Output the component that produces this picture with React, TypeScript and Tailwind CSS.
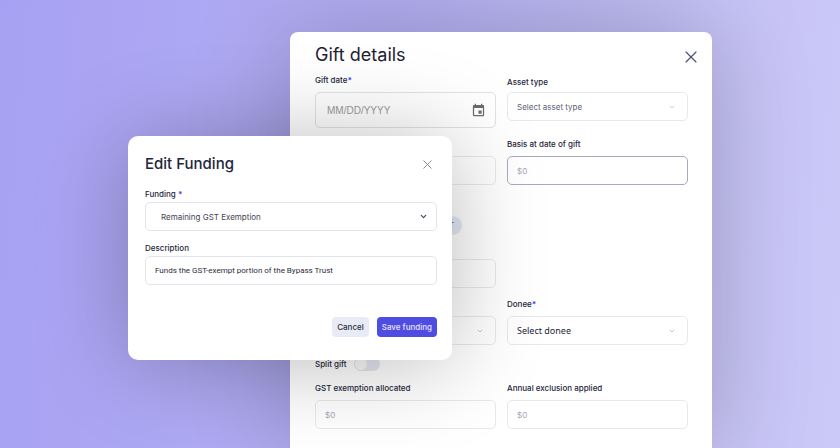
import type { ReactNode } from "react";
import { ChevronDown, X } from "lucide-react";
import { MdEvent } from "react-icons/md";

const label = "block h-4 text-[8px] leading-4 font-medium text-[#23263a]";
const box = "block w-full rounded-[5px] border bg-transparent outline-none";

function Required() {
  return <span className="font-bold text-[#4f46e5]">*</span>;
}

type FieldProps = { id: string; text: ReactNode; className?: string };

function MoneyField({ id, text, className = "border-[#10183018]" }: FieldProps) {
  return (
    <div>
      <label htmlFor={id} className={`${label} mb-1`}>{text}</label>
      <input
        id={id}
        placeholder="$0"
        className={`${box} h-[29px] px-[9px] text-[8px] placeholder:text-[#a3a5b5] ${className}`}
      />
    </div>
  );
}

function SelectBox({ id, option, name, className, chevron }: { id: string; option: string; name?: string; className: string; chevron: string }) {
  return (
    <div className="grid items-center">
      <select
        id={id}
        aria-label={name}
        className={`${box} col-start-1 row-start-1 h-[29px] appearance-none pr-6 ${className}`}
      >
        <option>{option}</option>
      </select>
      <ChevronDown aria-hidden="true" className={`pointer-events-none col-start-1 row-start-1 justify-self-end ${chevron}`} />
    </div>
  );
}

function GiftDetails() {
  return (
    <section className="ml-[162px] min-h-[calc(100vh-32px)] rounded-t-[8px] bg-white pr-6 pb-5 pl-[25px] shadow-[0_0_100px_rgba(0,0,0,0.22)]">
      <header className="flex h-10 items-start justify-between pt-[13px]">
        <h1 className="text-[18px] leading-5 text-[#1f2233]">Gift details</h1>
        <button aria-label="Close gift details" className="-mr-[13px] pt-0.5 text-[#4b5270]">
          <X className="size-5" strokeWidth={1.4} />
        </button>
      </header>
      <form className="grid grid-cols-2 gap-x-[11px] gap-y-2">
        <div>
          <label htmlFor="gift-date" className={`${label} mb-1`}>Gift date<Required /></label>
          <div className="flex h-9 items-center rounded-[5px] border border-[#10183020] pr-[9px] pl-[11px]">
            <input
              id="gift-date"
              placeholder="MM/DD/YYYY"
              className="min-w-0 flex-1 bg-transparent font-['Liberation_Sans',sans-serif] text-[10px] outline-none placeholder:text-[#9a9a9e]"
            />
            <button type="button" aria-label="Choose date" className="text-[#6c6c6e]">
              <MdEvent className="size-[15px]" />
            </button>
          </div>
        </div>
        <div className="pt-0.5">
          <label htmlFor="asset-type" className={`${label} mb-0.5`}>Asset type</label>
          <SelectBox id="asset-type" option="Select asset type" className="border-[#10183018] pl-[9px] text-[8px] text-[#5b5f78]" chevron="mr-3 size-2 text-[#b4b6c2]" />
        </div>

        <input aria-label="Gift value" className={`${box} h-[29px] self-end border-[#10183018] px-[9px] text-[8px]`} />
        <MoneyField id="basis" text="Basis at date of gift" className="border-[#a9a8bd]" />

        <div className="col-start-1 flex h-[95px] flex-col justify-between pt-[23px]">
          <span className="h-[19px] w-[147px] rounded-full bg-[#e4e9f4] pr-2 text-right text-[8px] leading-[19px] text-[#4b5270]">GST</span>
          <input aria-label="Gift amount" className={`${box} h-[29px] border-[#10183018] px-[9px] text-[8px]`} />
        </div>

        <div className="col-start-1 self-end">
          <SelectBox id="donor" name="Donor" option="" className="border-[#10183018] pl-[9px] text-[8px]" chevron="mr-3 size-2 text-[#a4a6b2]" />
        </div>
        <div>
          <label htmlFor="donee" className={`${label} mb-1`}>Donee<Required /></label>
          <SelectBox id="donee" option="Select donee" className="border-[#10183018] pl-[9px] font-['Noto_Sans',sans-serif] text-[9px] text-[#23263a]" chevron="mr-3 size-2 text-[#a4a6b2]" />
        </div>

        <div className="col-span-2 flex h-[19px] items-center gap-2 pt-0.5">
          <label htmlFor="split-gift" className={label}>Split gift</label>
          <input
            id="split-gift"
            type="checkbox"
            role="switch"
            className="h-3.5 w-[26px] appearance-none rounded-full bg-[#e4e7f0] before:block before:size-3.5 before:rounded-full before:border before:border-[#e4e7f0] before:bg-[#fbfbfc]"
          />
        </div>

        <MoneyField id="gst" text="GST exemption allocated" />
        <MoneyField id="annual" text="Annual exclusion applied" />
      </form>
    </section>
  );
}

function EditFunding() {
  return (
    <div
      role="dialog"
      aria-labelledby="edit-funding"
      className="absolute top-[136px] left-0 w-[324px] rounded-[10px] bg-white pt-[18px] pr-[15px] pb-[23px] pl-[17px] shadow-[0_4px_90px_rgba(0,0,0,0.27)]"
    >
      <header className="flex h-5 items-center justify-between">
        <h2 id="edit-funding" className="text-[15px] leading-5 font-medium text-[#23263a]">Edit Funding</h2>
        <button aria-label="Close edit funding" className="mr-0.5 text-[#85868c]">
          <X className="size-[15px]" strokeWidth={1.5} />
        </button>
      </header>
      <form>
        <label htmlFor="funding" className={`${label} mt-3`}>Funding <Required /></label>
        <SelectBox id="funding" option="Remaining GST Exemption" className="border-[#e2e4ec] pl-[15px] text-[8px] text-[#44464f]" chevron="mr-[9px] size-[9px] stroke-[3] text-[#3f4560]" />
        <label htmlFor="description" className={`${label} mt-[9px]`}>Description</label>
        <input
          id="description"
          defaultValue="Funds the GST-exempt portion of the Bypass Trust"
          className={`${box} h-[29px] border-[#e2e4ec] px-[9px] font-['Roboto',sans-serif] text-[8px] text-[#2b2d3a]`}
        />
        <div className="mt-8 flex justify-end gap-2">
          <button type="button" className="h-5 rounded-[4px] bg-[#e8ebf6] px-[5px] text-[8px] font-medium text-[#2b2e42]">Cancel</button>
          <button type="button" className="h-5 rounded-[4px] bg-[#4f4ce2] px-[5px] text-[8px] font-medium text-[#e6e5fc]">Save funding</button>
        </div>
      </form>
    </div>
  );
}

export default function App() {
  return (
    <main className="h-screen overflow-hidden bg-[linear-gradient(95deg,#a7a1f3_0%,#b5b1f3_50%,#c8c5f6_88%,#cbc9f8_100%)] px-4 font-['Inter',sans-serif]">
      <div className="relative mx-auto max-w-[584px] pt-8">
        <GiftDetails />
        <EditFunding />
      </div>
    </main>
  );
}
